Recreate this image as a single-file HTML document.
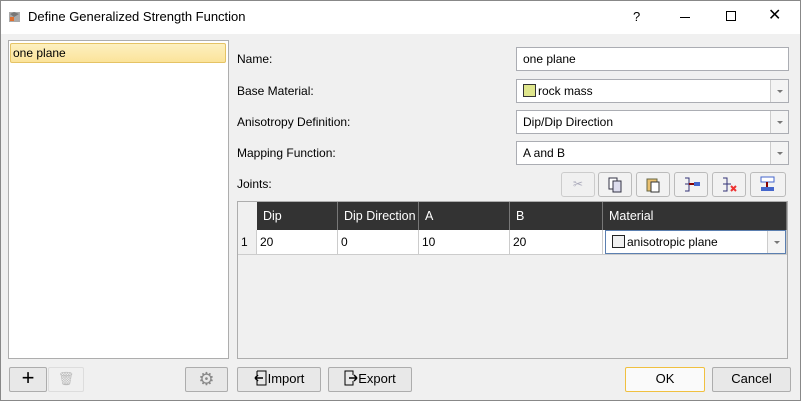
<!DOCTYPE html><html><head><style>
*{box-sizing:border-box;margin:0;padding:0}
body{width:801px;height:401px;overflow:hidden;font-family:"Segoe UI","Liberation Sans",sans-serif;font-size:12px;color:#000;background:#f0f0f0;position:relative}
.a{position:absolute}
.win{left:0;top:0;width:801px;height:401px;border:1px solid #888}
.title{left:1px;top:1px;width:799px;height:33px;background:#fff}
.inp{background:#fff;border:1px solid #abadb3;height:24px;padding:4px 6px;line-height:15px;white-space:nowrap}
.dd{position:absolute;right:0;top:0;width:18px;height:22px;border-left:1px solid #ccc;background:#f4f4f4}
.dd:after{content:"";position:absolute;left:6px;top:10px;border:3px solid transparent;border-top:3px solid #777}
.btn{background:#e8e8e8;border:1px solid #adadad;border-radius:2px;height:25px;text-align:center;line-height:22px;font-size:13px}
.tb{background:#f2f2f2;border:1px solid #bbb;border-radius:3px;height:25px;top:172px;width:34px}
.th{background:#333;color:#fff;top:202px;height:28px;line-height:28px;padding-left:6px;font-size:12.5px;border-right:1px solid #777}
.td{background:#fff;top:230px;height:25px;line-height:24px;padding-left:3px;border-right:1px solid #ccc;border-bottom:1px solid #ccc}
.lbl{left:237px}
</style></head><body>
<div class="a win"></div>
<div class="a title"></div>
<svg class="a" style="left:8px;top:10px" width="14" height="14"><rect x="1" y="2" width="11" height="10" fill="#aaa"/><path d="M2 4l4-2 5 2-5 3z" fill="#777"/><rect x="2" y="7" width="4" height="4" fill="#e07030"/></svg>
<div class="a" style="left:28px;top:9px;font-size:13px">Define Generalized Strength Function</div>
<div class="a" style="left:633px;top:9px;font-size:13px">?</div>
<div class="a" style="left:680px;top:17px;width:10px;height:1px;background:#000"></div>
<div class="a" style="left:726px;top:11px;width:10px;height:10px;border:1px solid #000"></div>
<div class="a" style="left:768px;top:5px;font-size:16px">✕</div>

<div class="a" style="left:8px;top:40px;width:221px;height:319px;background:#fff;border:1px solid #adadad"></div>
<div class="a" style="left:10px;top:43px;width:216px;height:20px;background:linear-gradient(#fdf0c0,#fbe39a);border:1px solid #e5c365;border-radius:2px;padding-left:2px;line-height:18px">one plane</div>

<div class="a lbl" style="top:52px">Name:</div>
<div class="a lbl" style="top:84px">Base Material:</div>
<div class="a lbl" style="top:115px">Anisotropy Definition:</div>
<div class="a lbl" style="top:146px">Mapping Function:</div>
<div class="a lbl" style="top:177px">Joints:</div>
<div class="a inp" style="left:516px;top:47px;width:273px">one plane</div>
<div class="a inp" style="left:516px;top:79px;width:273px"><span style="display:inline-block;width:13px;height:13px;background:#dfe68c;border:1px solid #333;vertical-align:-2px;margin-right:2px"></span>rock mass<div class="dd"></div></div>
<div class="a inp" style="left:516px;top:110px;width:273px">Dip/Dip Direction<div class="dd"></div></div>
<div class="a inp" style="left:516px;top:141px;width:273px">A and B<div class="dd"></div></div>

<div class="a tb" style="left:561px;background:#f0f0f0;border-color:#ccc;color:#aab;text-align:center;line-height:22px">✂</div>
<div class="a tb" style="left:598px"><svg width="32" height="23"><rect x="10" y="5" width="8" height="11" fill="#fff" stroke="#334"/><rect x="14" y="8" width="8" height="11" fill="#dde" stroke="#334"/></svg></div>
<div class="a tb" style="left:636px"><svg width="32" height="23"><rect x="10" y="6" width="10" height="12" fill="#e9c070" stroke="#664"/><rect x="14" y="9" width="8" height="10" fill="#fff" stroke="#333"/></svg></div>
<div class="a tb" style="left:674px"><svg width="32" height="23"><path d="M10 5h4v13h-4M10 11h4" stroke="#337" fill="none"/><rect x="19" y="9" width="6" height="4" fill="#46c"/><path d="M14 11h5" stroke="#800" stroke-width="2"/></svg></div>
<div class="a tb" style="left:712px"><svg width="32" height="23"><path d="M10 5h4v13h-4M10 11h8" stroke="#337" fill="none"/><path d="M18 13l5 5M23 13l-5 5" stroke="#e33" stroke-width="2"/></svg></div>
<div class="a tb" style="left:750px;width:36px"><svg width="34" height="23"><rect x="10" y="4" width="13" height="5" fill="#fff" stroke="#46c"/><rect x="10" y="14" width="13" height="4" fill="#46c"/><path d="M16 9v5" stroke="#800" stroke-width="2"/></svg></div>

<div class="a" style="left:237px;top:201px;width:551px;height:158px;background:#f0f0f0;border:1px solid #adadad"></div>
<div class="a" style="left:238px;top:202px;width:19px;height:28px;background:#f0f0f0"></div>
<div class="a th" style="left:257px;width:81px">Dip</div>
<div class="a th" style="left:338px;width:81px">Dip Direction</div>
<div class="a th" style="left:419px;width:91px">A</div>
<div class="a th" style="left:510px;width:93px">B</div>
<div class="a th" style="left:603px;width:184px">Material</div>
<div class="a td" style="left:238px;width:19px;background:#f0f0f0">1</div>
<div class="a td" style="left:257px;width:81px">20</div>
<div class="a td" style="left:338px;width:81px">0</div>
<div class="a td" style="left:419px;width:91px">10</div>
<div class="a td" style="left:510px;width:93px">20</div>
<div class="a td" style="left:603px;width:184px;padding-left:2px"><div style="position:relative;border:1px solid #5b7fb0;height:24px;padding-left:6px;line-height:22px"><span style="display:inline-block;width:13px;height:13px;background:#f0f0f0;border:1px solid #222;vertical-align:-2px;margin-right:2px"></span>anisotropic plane<div class="dd" style="top:0;height:22px"></div></div></div>

<div class="a btn" style="left:9px;top:367px;width:38px;font-size:22px;line-height:20px">+</div>
<div class="a btn" style="left:48px;top:367px;width:36px;background:#f0f0f0;border-color:#ddd;color:#bbb">🗑</div>
<div class="a btn" style="left:185px;top:367px;width:43px;color:#888;font-size:18px">⚙</div>
<div class="a btn" style="left:237px;top:367px;width:84px"><svg width="14" height="16" style="vertical-align:-3px"><path d="M3 1h9v14h-9v-4M3 5v-4" stroke="#000" fill="none"/><path d="M1 8h8M1 8l3-3M1 8l3 3" stroke="#000" stroke-width="1.5" fill="none"/></svg>Import</div>
<div class="a btn" style="left:328px;top:367px;width:84px"><svg width="14" height="16" style="vertical-align:-3px"><path d="M9 5v-4h-8v14h8v-4" stroke="#000" fill="none"/><path d="M5 8h8M13 8l-3-3M13 8l-3 3" stroke="#000" stroke-width="1.5" fill="none"/></svg>Export</div>
<div class="a btn" style="left:625px;top:367px;width:80px;border:1px solid #f0c040;background:#fafafa">OK</div>
<div class="a btn" style="left:712px;top:367px;width:79px">Cancel</div>
</body></html>
